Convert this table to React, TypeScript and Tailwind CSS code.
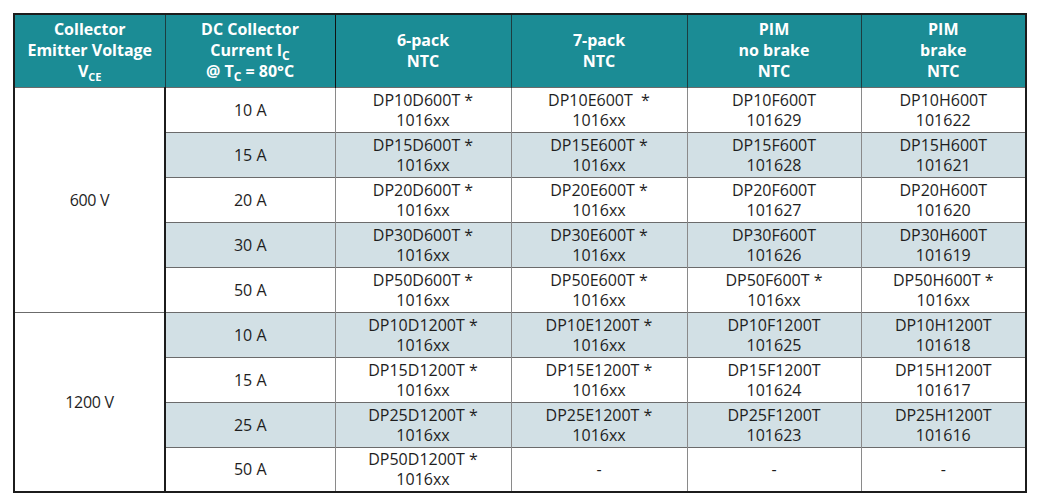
const font = { fontFamily: '"Open Sans", "Liberation Sans", sans-serif' };

type Cell = [string, string] | null;
type Row = { amp: string; shaded: boolean; cells: Cell[] };

const rows600: Row[] = [
  { amp: "10 A", shaded: false, cells: [["DP10D600T *", "1016xx"], ["DP10E600T  *", "1016xx"], ["DP10F600T", "101629"], ["DP10H600T", "101622"]] },
  { amp: "15 A", shaded: true, cells: [["DP15D600T *", "1016xx"], ["DP15E600T *", "1016xx"], ["DP15F600T", "101628"], ["DP15H600T", "101621"]] },
  { amp: "20 A", shaded: false, cells: [["DP20D600T *", "1016xx"], ["DP20E600T *", "1016xx"], ["DP20F600T", "101627"], ["DP20H600T", "101620"]] },
  { amp: "30 A", shaded: true, cells: [["DP30D600T *", "1016xx"], ["DP30E600T *", "1016xx"], ["DP30F600T", "101626"], ["DP30H600T", "101619"]] },
  { amp: "50 A", shaded: false, cells: [["DP50D600T *", "1016xx"], ["DP50E600T *", "1016xx"], ["DP50F600T *", "1016xx"], ["DP50H600T *", "1016xx"]] },
];

const rows1200: Row[] = [
  { amp: "10 A", shaded: true, cells: [["DP10D1200T *", "1016xx"], ["DP10E1200T *", "1016xx"], ["DP10F1200T", "101625"], ["DP10H1200T", "101618"]] },
  { amp: "15 A", shaded: false, cells: [["DP15D1200T *", "1016xx"], ["DP15E1200T *", "1016xx"], ["DP15F1200T", "101624"], ["DP15H1200T", "101617"]] },
  { amp: "25 A", shaded: true, cells: [["DP25D1200T *", "1016xx"], ["DP25E1200T *", "1016xx"], ["DP25F1200T", "101623"], ["DP25H1200T", "101616"]] },
  { amp: "50 A", shaded: false, cells: [["DP50D1200T *", "1016xx"], null, null, null] },
];

function Group({ volt, rows }: { volt: string; rows: Row[] }) {
  return (
    <>
      {rows.map((r, i) => (
        <tr key={r.amp} className={`h-[45px] ${r.shaded ? "bg-[#d2e0e5]" : "bg-white"}`}>
          {i === 0 && (
            <td rowSpan={rows.length} className="bg-white border-t-[1.5px] border-t-[#6b6b6b] border-r-2 border-r-[#1c1c1c] text-center text-[16px] tracking-[-0.3px] text-[#1e1e1e]">
              {volt}
            </td>
          )}
          <td className="border-t-[1.5px] border-t-[#6b6b6b] border-r-[1.5px] border-r-[#8a8a8a] text-center text-[16px] text-[#1e1e1e]">
            {r.amp}
          </td>
          {r.cells.map((c, j) => (
            <td
              key={j}
              className={`border-t-[1.5px] border-t-[#6b6b6b] text-center text-[16px] leading-[20px] text-[#1e1e1e] ${j < 3 ? "border-r-[1.5px] border-r-[#8a8a8a]" : ""}`}
            >
              {c ? (
                <>
                  <div className="whitespace-pre">{c[0]}</div>
                  <div>{c[1]}</div>
                </>
              ) : (
                <div>-</div>
              )}
            </td>
          ))}
        </tr>
      ))}
    </>
  );
}

export default function App() {
  const th = "border-r border-r-[#1d3d40] text-center align-middle text-[16px] font-bold leading-[21px] text-white";
  const sub = "relative top-[4px] text-[12px] leading-none align-baseline";
  return (
    <div className="w-[1047px] h-[499px] overflow-hidden bg-white" style={font}>
      <div className="pl-[13px] pt-[13px]">
        <table className="w-[1012px] table-fixed border-collapse border-2 border-[#1c1c1c]">
          <colgroup>
            <col className="w-[151px]" />
            <col className="w-[170px]" />
            <col className="w-[176px]" />
            <col className="w-[176px]" />
            <col className="w-[174px]" />
            <col className="w-[165px]" />
          </colgroup>
          <thead>
            <tr className="h-[73px] bg-[#1b8c95]">
              <th className={th}>
                Collector
                <br />
                Emitter Voltage
                <br />
                V<span className="relative top-[4px] text-[11px] leading-none">CE</span>
              </th>
              <th className={`${th} border-r-[#111]`}>
                DC Collector
                <br />
                Current I<span className={sub}>C</span>
                <br />@ T<span className={sub}>C</span> = 80°C
              </th>
              <th className={th}>
                6-pack
                <br />
                NTC
              </th>
              <th className={th}>
                7-pack
                <br />
                NTC
              </th>
              <th className={th}>
                PIM
                <br />
                no brake
                <br />
                NTC
              </th>
              <th className="text-center align-middle text-[16px] font-bold leading-[21px] text-white">
                PIM
                <br />
                brake
                <br />
                NTC
              </th>
            </tr>
          </thead>
          <tbody>
            <Group volt="600 V" rows={rows600} />
            <Group volt="1200 V" rows={rows1200} />
          </tbody>
        </table>
        <p className="mt-[2px] pl-[2px] text-[16px] leading-[20px] text-[#1e1e1e]">
          *: To be checked with our Commercial team for availability
        </p>
      </div>
    </div>
  );
}
